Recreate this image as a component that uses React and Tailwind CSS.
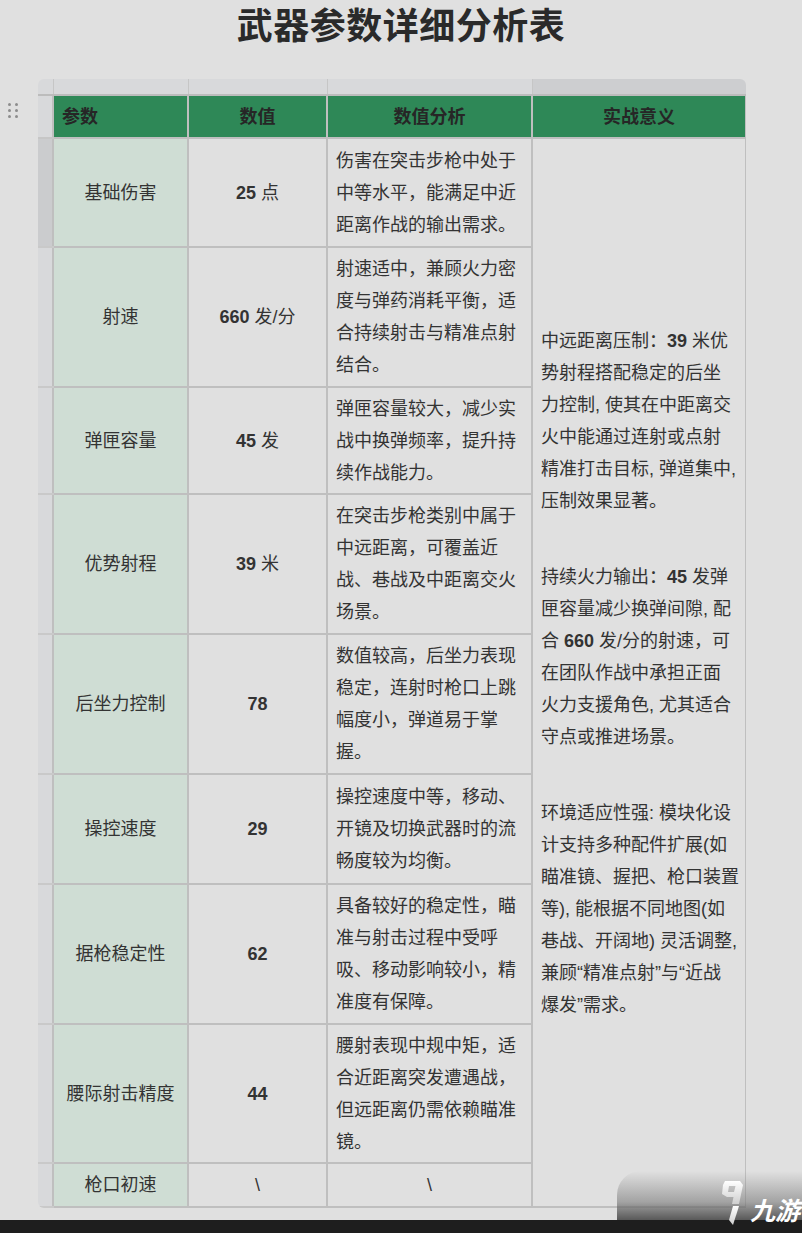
import React from 'react';

const rows = [
  { name: '基础伤害', value: <><b>25</b> 点</>, note: '伤害在突击步枪中处于中等水平，能满足中近距离作战的输出需求。', h: 'h-[109px]' },
  { name: '射速', value: <><b>660</b> 发/分</>, note: '射速适中，兼顾火力密度与弹药消耗平衡，适合持续射击与精准点射结合。', h: 'h-[140px]' },
  { name: '弹匣容量', value: <><b>45</b> 发</>, note: '弹匣容量较大，减少实战中换弹频率，提升持续作战能力。', h: 'h-[107px]' },
  { name: '优势射程', value: <><b>39</b> 米</>, note: '在突击步枪类别中属于中远距离，可覆盖近战、巷战及中距离交火场景。', h: 'h-[140px]' },
  { name: '后坐力控制', value: <b>78</b>, note: '数值较高，后坐力表现稳定，连射时枪口上跳幅度小，弹道易于掌握。', h: 'h-[140px]' },
  { name: '操控速度', value: <b>29</b>, note: '操控速度中等，移动、开镜及切换武器时的流畅度较为均衡。', h: 'h-[110px]' },
  { name: '据枪稳定性', value: <b>62</b>, note: '具备较好的稳定性，瞄准与射击过程中受呼吸、移动影响较小，精准度有保障。', h: 'h-[140px]' },
  { name: '腰际射击精度', value: <b>44</b>, note: '腰射表现中规中矩，适合近距离突发遭遇战，但远距离仍需依赖瞄准镜。', h: 'h-[139px]' },
  { name: '枪口初速', value: '\\', note: '\\', h: 'h-[44px]', center: true },
];

const meaning = [
  [<>中远距离压制：<b>39</b> 米优</>, '势射程搭配稳定的后坐', '力控制, 使其在中距离交', '火中能通过连射或点射', '精准打击目标, 弹道集中,', '压制效果显著。'],
  [<>持续火力输出：<b>45</b> 发弹</>, '匣容量减少换弹间隙, 配', <>合 <b>660</b> 发/分的射速，可</>, '在团队作战中承担正面', '火力支援角色, 尤其适合', '守点或推进场景。'],
  ['环境适应性强: 模块化设', '计支持多种配件扩展(如', '瞄准镜、握把、枪口装置', '等), 能根据不同地图(如', '巷战、开阔地) 灵活调整,', '兼顾“精准点射”与“近战', '爆发”需求。'],
];

const cell = 'border-2 border-[#bfbfbf]';

function Logo() {
  return (
    <svg width="26" height="46" viewBox="0 0 26 46">
      <defs>
        <linearGradient id="lg" x1="0" y1="0" x2="0" y2="1">
          <stop offset="0" stopColor="#ffffff" />
          <stop offset="1" stopColor="#cfcfcf" />
        </linearGradient>
      </defs>
      <path d="M7 1 L22 1 L25 5 L21 24 L14 24 L15.5 17 L9 17 L4 14 L5 5 Z M11 6 L10 12 L16 12 L17.5 6 Z" fill="url(#lg)" fillRule="evenodd" />
      <path d="M15 26 L21 26 L15 45 L11 40 Z" fill="url(#lg)" />
    </svg>
  );
}

export default function App() {
  return (
    <div className="relative min-h-[1233px] bg-[#e0e0e0] overflow-hidden text-[#333] font-['Liberation_Sans','Noto_Sans_CJK_SC',sans-serif]">
      <h1 className="pt-[5px] text-center text-[36px] leading-[44px] font-bold text-[#2a2a2a] tracking-[0.5px]">武器参数详细分析表</h1>

      <div className="relative mt-[30px] ml-[38px] w-[708px]">
        <div className="absolute left-[-30px] top-[24px] grid grid-cols-2 gap-x-[4px] gap-y-[3px]">
          {[0, 1, 2, 3, 4, 5].map((i) => (
            <span key={i} className="block w-[3px] h-[3px] rounded-full bg-[#8c8c8c]" />
          ))}
        </div>

        <div className="overflow-hidden rounded-t-[6px] rounded-bl-[6px]">
          <table className="table-fixed border-collapse w-[708px] text-[18px] leading-[32px]">
            <colgroup>
              <col className="w-[15px]" />
              <col className="w-[135px]" />
              <col className="w-[139px]" />
              <col className="w-[205px]" />
              <col className="w-[214px]" />
            </colgroup>
            <thead>
              <tr className="h-[16px]">
                <td className="bg-[#d8d9db] border-r border-b-2 border-[#c6c6c6] border-b-[#bcbcbc]" />
                <td className="bg-[#d8d9db] border-r border-b-2 border-[#c6c6c6] border-b-[#bcbcbc]" />
                <td className="bg-[#d8d9db] border-r border-b-2 border-[#c6c6c6] border-b-[#bcbcbc]" />
                <td className="bg-[#d8d9db] border-r border-b-2 border-[#c6c6c6] border-b-[#bcbcbc]" />
                <td className="bg-[#cdced0] border-b-2 border-[#bcbcbc]" />
              </tr>
              <tr className="h-[43px] font-bold text-[#262626]">
                <th className="bg-[#d8d9db] border-b-2 border-[#c6c6c6]" />
                <th className={`${cell} bg-[#2e8857] text-left pl-[8px]`}>参数</th>
                <th className={`${cell} bg-[#2e8857] text-center`}>数值</th>
                <th className={`${cell} bg-[#2e8857] text-center`}>数值分析</th>
                <th className={`${cell} bg-[#2e8857] text-center`}>实战意义</th>
              </tr>
            </thead>
            <tbody>
              {rows.map((r, i) => (
                <tr key={r.name} className={r.h}>
                  <td className={`border-b-2 border-[#c9c9c9] ${i === 0 ? 'bg-[#cbccce]' : 'bg-[#d8d9db]'}`} />
                  <td className={`${cell} bg-[#cfddd4] text-center align-middle`}>{r.name}</td>
                  <td className={`${cell} text-center align-middle`}>{r.value}</td>
                  <td className={`${cell} align-middle px-[8px] ${r.center ? 'text-center' : 'text-left'}`}>{r.note}</td>
                  {i === 0 && (
                    <td rowSpan={rows.length} className={`${cell} align-middle pl-[8px] pr-[2px]`}>
                      {meaning.map((p, pi) => (
                        <div key={pi} className={pi > 0 ? 'mt-[44px]' : ''}>
                          {p.map((line, li) => (
                            <div key={li} className="whitespace-nowrap">{line}</div>
                          ))}
                        </div>
                      ))}
                    </td>
                  )}
                </tr>
              ))}
            </tbody>
          </table>
        </div>
      </div>

      <div className="absolute right-0 bottom-0 w-[185px] h-[62px] rounded-tl-[24px] bg-gradient-to-b from-[#e0e0e0]/0 via-[#7a7a7a]/60 to-[#262626]" />
      <div className="absolute left-0 right-0 bottom-0 h-[13px] bg-[#1e1e1e]" />
      <div className="absolute right-[2px] bottom-[7px] flex items-end gap-[6px]">
        <Logo />
        <span className="mb-[2px] text-[25px] leading-[26px] font-bold italic text-white">九游</span>
      </div>
    </div>
  );
}
